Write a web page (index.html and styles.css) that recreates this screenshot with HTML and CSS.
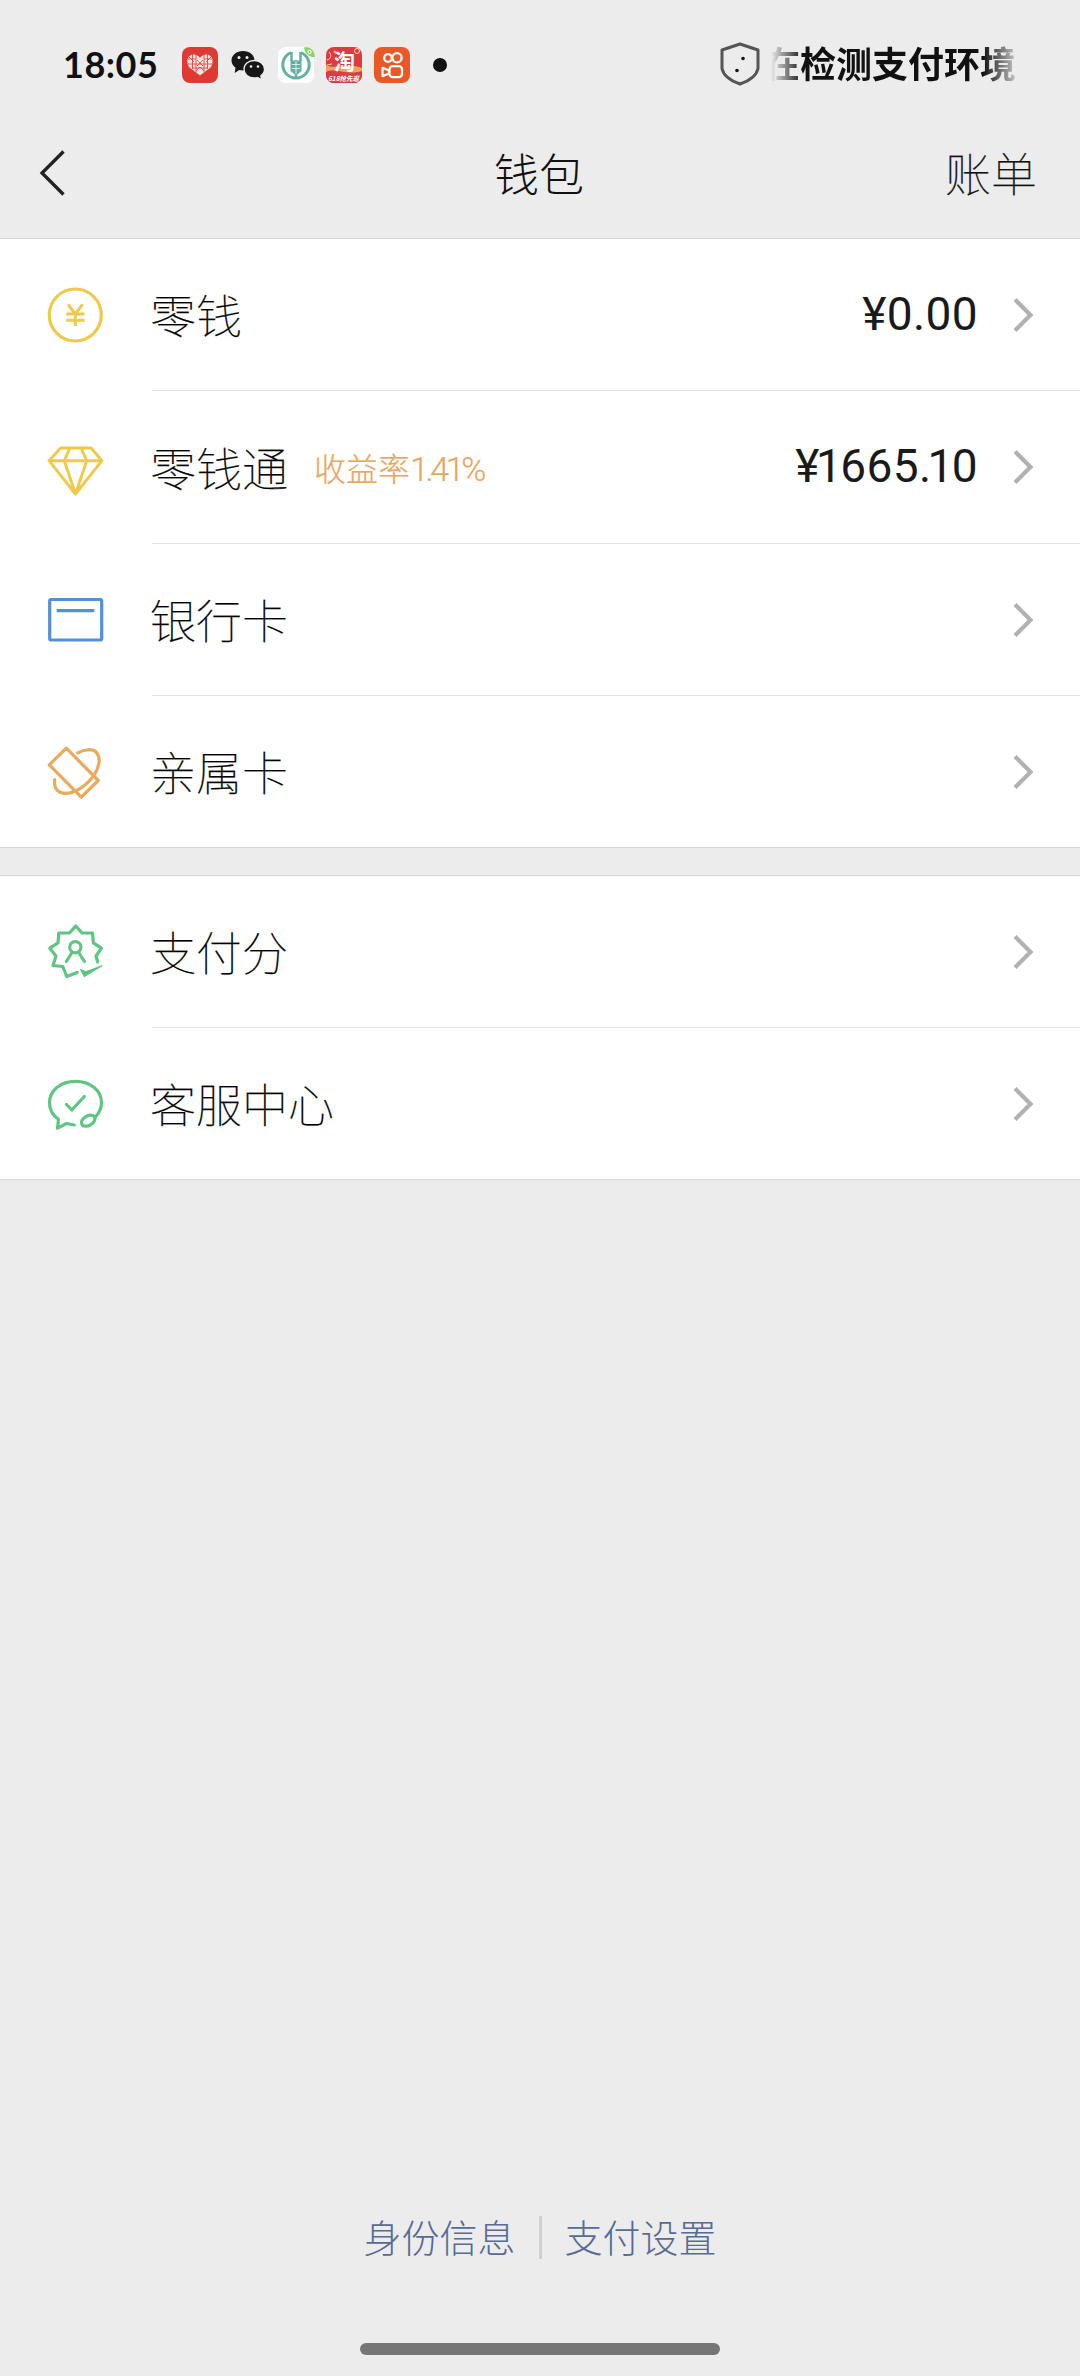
FILE: index.html
```html
<!DOCTYPE html>
<html lang="zh-CN">
<head>
<meta charset="utf-8">
<title>钱包</title>
<link rel="stylesheet" href="styles.css">
</head>
<body>
<svg class="defs" width="0" height="0" aria-hidden="true">
  <symbol id="chevron" viewBox="0 0 22 38"><path d="M3 3.500 18.500 19 3 34.500" fill="none" stroke="#b2b2b2" stroke-width="4.200"/></symbol>
</svg>
<div class="screen">
  <div class="status">
    <span class="time">18:05</span>
    <div class="apps">
      <svg viewBox="0 0 36 36"><rect width="36" height="36" rx="8" fill="#de3a33"/>
        <path d="M18 28.500 7 20C3.500 14 6 7 12 7.500c3 .2 5 2 6 3.500 1-1.500 3-3.300 6-3.500 6-.5 8.500 6.500 5 12.500z" fill="#fbe3e0"/>
        <path d="M10.500 7v15M14 8v17M22 8v17M25.500 7v15M6 12h8M22 12h8M6 17h24M10 21h16M15 13l6 6M21 13l-6 6M7 10l5 5M29 10l-5 5M14 24l4-4 4 4" stroke="#de3a33" stroke-width=".8" fill="none"/></svg>
      <svg viewBox="0 0 36 36"><path d="M13 4C6.500 4 1.500 8.200 1.500 13.500c0 3 1.600 5.500 4 7.300L4.700 26l4.500-2.900c1.300.3 2.500.4 3.800.4 6.500 0 11.500-4.400 11.500-10S19.500 4 13 4z" fill="#171717"/>
        <path d="M24.200 13.500c-6 0-10.200 3.800-10.200 8.700s4.200 8.800 10.200 8.800c1.200 0 2.300-.2 3.300-.5l4.300 2.300-1-4c2.100-1.600 3.700-3.900 3.700-6.600 0-4.900-4.600-8.700-10.300-8.700z" fill="#171717" stroke="#ededed" stroke-width="1.300"/>
        <g fill="#ededed"><circle cx="9" cy="10.500" r="1.500"/><circle cx="17" cy="10.500" r="1.500"/><circle cx="21" cy="19.500" r="1.300"/><circle cx="28" cy="19.500" r="1.300"/></g></svg>
      <svg class="bleed" viewBox="0 0 36 36"><rect width="36" height="36" rx="8" fill="#fff"/>
        <path d="M13 5.600A13.200 13.200 0 1 0 23 5.600" fill="none" stroke="#66b0a3" stroke-width="3"/>
        <path d="M13.500 5v9M22.500 5v9M18 13v19" fill="none" stroke="#66b0a3" stroke-width="2.500"/><path d="M12.500 13.500h11V24L18 28.500 12.500 24z" fill="#66b0a3"/><path d="M14 17.500h8M14 21.500h8M18 14v13" stroke="#d5ece7" stroke-width="1"/>
        <path d="M26 .5c5-1 10 1 11 9.500-5 .5-10-2-11-9.500z" fill="#8fd16b"/><circle cx="31.500" cy="5" r="1.700" fill="none" stroke="#fff"/></svg>
      <svg viewBox="0 0 36 36"><rect width="36" height="36" rx="8" fill="#dc3b43"/>
        <path d="M0 18C8 23 22 15 36 21v8H0z" fill="#f0a35c"/><path d="M0 25c10-5 19 4 36-1v4a8 8 0 0 1-8 8H8a8 8 0 0 1-8-8z" fill="#d83c4b"/>
        <g fill="none" stroke="#ffd7b4"><path d="M1 13c4-1 5-5 2-8M1 18l5-1"/><circle cx="31" cy="4" r="2.500"/><circle cx="9" cy="5" r="1"/></g>
        <text class="app-glyph" x="18.500" y="21.500">淘</text><text class="app-tag" x="17.500" y="33.500">618抢先逛</text></svg>
      <svg viewBox="0 0 36 36"><rect width="36" height="36" rx="8" fill="#ea5828"/>
        <g fill="none" stroke="#fff" stroke-width="2.200" stroke-linejoin="round"><circle cx="14" cy="11" r="3.800"/><circle cx="23" cy="10.700" r="4.600"/><rect x="15.500" y="19.200" width="12.500" height="11" rx="3.200"/><path d="m15 23.500-6.500-2.700v8.500l6.500-2.800z"/></g></svg>
    </div>
    <span class="more"></span>
    <svg class="shield" viewBox="0 0 42 46"><path d="M21 3 39 9v18.500Q37 37.500 21 43 5 37.500 3 27.500V9z" fill="none" stroke="#555" stroke-width="3" stroke-linejoin="round"/><circle cx="24" cy="17.500" r="1.800" fill="#111"/><circle cx="18" cy="29.500" r="1.800" fill="#111"/></svg>
    <div class="ticker"><span>在检测支付环境</span></div>
  </div>
  <header class="nav">
    <svg class="back" viewBox="0 0 32 50"><path d="M26.500 3.500 5 25l21.500 21.500" fill="none" stroke="#222" stroke-width="3.300"/></svg>
    <h1>钱包</h1>
    <a class="bill">账单</a>
  </header>
  <main>
    <section class="list">
      <div class="row">
        <svg class="icon gold" viewBox="0 0 60 60"><circle cx="30.300" cy="30" r="26"/><path d="m23 19.300 7.300 9.700 7.300-9.700M21.300 29h18.200M21.300 35.200h18.200M30.300 28v13" stroke-width="3" stroke-linecap="butt"/></svg>
        <div class="body"><span class="label">零钱</span><span class="amount">¥0.00</span><svg class="go"><use href="#chevron"/></svg></div>
      </div>
      <div class="row">
        <svg class="icon gold" viewBox="0 0 60 60"><path d="M15.700 10H46L57 22.700 30.500 56 4 22.700zM4 22.700h53M25 10l-5.700 12.700L30.500 56 41.700 22.700 36 10" stroke-width="2.900"/></svg>
        <div class="body"><span class="label">零钱通</span><span class="rate">收益率<b>1.41%</b></span><span class="amount">¥<span class="one">1</span>665.<span class="one">1</span>0</span><svg class="go"><use href="#chevron"/></svg></div>
      </div>
      <div class="row">
        <svg class="icon blue" viewBox="0 0 60 60"><rect x="4.700" y="9.500" width="52" height="40.500" rx="1.500"/><path d="M11.700 20.700h37.600" stroke-linecap="butt"/></svg>
        <div class="body"><span class="label">银行卡</span><svg class="go"><use href="#chevron"/></svg></div>
      </div>
      <div class="row">
        <svg class="icon orange" viewBox="0 0 60 60"><path d="M21.300 6.200 53.300 38.500 36.300 55.200 4.300 22.800zM32.700 10.800C40 7 48 6.500 51.500 10.500 56 16 54.500 25.500 48.300 34.200 43.500 40.500 37 46 30 49.200 19 54 8 51 9.700 37.500"/></svg>
        <div class="body"><span class="label">亲属卡</span><svg class="go"><use href="#chevron"/></svg></div>
      </div>
    </section>
    <section class="list">
      <div class="row">
        <svg class="icon green" viewBox="0 0 60 60"><path d="M52.700 40 51 34l5.500-7.800-8.200-5.400-.8-9.800-10.800-.2-6-6.800-6 6.800-10.900.2-.8 9.800-8.200 5.400L11 34l-3 9.500 9.800 1L21.700 54.500l10.500-4"/><circle cx="30.300" cy="25.200" r="5.600"/><path d="m27.300 30-6 9.500M33.300 30l6.200 9.500"/><path d="m35.500 47.500 3.800 7 17.700-10.800-16.300 6.100z" fill="#5fc583" stroke-width="1.200"/></svg>
        <div class="body"><span class="label">支付分</span><svg class="go"><use href="#chevron"/></svg></div>
      </div>
      <div class="row">
        <svg class="icon green" viewBox="0 0 60 60"><path d="M29.300 51 21.500 49.500 12.500 54.200 13.500 45.300C8 41.500 4.500 35.500 4.500 28.700 4.500 16.500 15.500 7.300 30.500 7.300S56.500 16.500 56.500 28.700c0 5-2.500 10.300-6 14.300"/><ellipse cx="43.200" cy="46.700" rx="7.300" ry="4.800" transform="rotate(-30 43.200 46.700)"/><path d="m21.500 30.500 5.300 5.500L39.300 22.500"/></svg>
        <div class="body"><span class="label">客服中心</span><svg class="go"><use href="#chevron"/></svg></div>
      </div>
    </section>
  </main>
  <footer class="links"><a>身份信息</a><i></i><a>支付设置</a></footer>
  <div class="home"></div>
</div>
</body>
</html>
```
FILE: styles.css
```css
* { box-sizing: border-box; }
body { margin: 0; background: #ececec; color: #111; font-family: "Noto Sans CJK SC", sans-serif; }
.defs { display: block; }
.screen { width: 1080px; height: 2376px; display: flex; flex-direction: column; overflow: hidden; }

.status { flex: none; height: 108px; padding: 22px 64px 0 63px; display: flex; align-items: center; }
.time { width: 119px; padding-bottom: 3px; font: 700 36px/1 Lato, sans-serif; letter-spacing: 0.5px; white-space: nowrap; }
.apps { display: flex; gap: 12px; }
.apps svg { display: block; width: 36px; height: 36px; }
.apps .bleed { overflow: visible; }
.app-glyph { font-size: 21px; font-weight: 700; fill: #fff; text-anchor: middle; }
.app-tag { font-size: 6.5px; font-weight: 700; font-style: italic; fill: #fff; text-anchor: middle; }
.more { width: 14px; height: 14px; margin-left: 23px; border-radius: 50%; background: #111; }
.shield { width: 42px; height: 46px; margin-left: auto; margin-bottom: 2px; }
.ticker { width: 245px; margin: 0 0 6px 10px; overflow: hidden; display: flex; justify-content: flex-end; -webkit-mask-image: linear-gradient(to right, transparent 0, #000 32px, #000 212px, transparent 252px); mask-image: linear-gradient(to right, transparent 0, #000 32px, #000 212px, transparent 252px); }
.ticker span { flex: none; font-size: 36px; line-height: 44px; font-weight: 700; white-space: nowrap; }

.nav { flex: none; height: 131px; padding: 0 43px 0 37px; display: grid; grid-template-columns: 1fr auto 1fr; align-items: center; border-bottom: 1px solid #d5d5d5; }
.back { width: 32px; height: 50px; }
.nav h1 { margin: 0; padding-left: 4px; font-size: 45px; line-height: 60px; font-weight: 300; }
.bill { justify-self: end; padding-bottom: 5px; font-size: 46px; line-height: 60px; font-weight: 100; -webkit-text-stroke: 0.25px #111; }

.list { background: #fff; border-bottom: 1px solid #d5d5d5; }
.list + .list { margin-top: 27px; border-top: 1px solid #d5d5d5; }
.row { height: 152px; padding-left: 45px; display: flex; align-items: center; }
.list:first-child .row:nth-child(2) { height: 153px; }
.row:last-child { height: 151px; }
.icon { width: 60px; height: 60px; flex: none; fill: none; stroke-width: 3.2; stroke-linecap: round; stroke-linejoin: round; }
.gold { stroke: #efc94c; }
.blue { stroke: #5390d9; }
.orange { stroke: #e9aa5c; }
.green { stroke: #5fc583; }
.body { flex: 1; align-self: stretch; margin-left: 47px; padding-right: 46px; display: flex; align-items: center; border-bottom: 1px solid #e2e2e2; }
.row:last-child .body { border-bottom: 0; }
.label { margin-left: -2px; padding-bottom: 3px; font-size: 46px; line-height: 60px; font-weight: 100; color: #000; -webkit-text-stroke: 0.25px #000; }
.rate { margin-left: 26px; font-size: 32px; line-height: 44px; font-weight: 300; color: #e8a55c; white-space: nowrap; -webkit-text-stroke: 0.2px #e8a55c; }
.rate b { font: 300 34px/1 Roboto, sans-serif; letter-spacing: -3.4px; }
.amount { margin-left: auto; padding-bottom: 2px; font: 400 46px/56px Roboto, sans-serif; color: #1a1a1a; letter-spacing: 0.4px; }
.one { margin: 0 -2px 0 -4px; }
.go { width: 22px; height: 38px; flex: none; margin-left: auto; }
.amount + .go { margin-left: 34px; }

.links { margin-top: auto; height: 60px; display: flex; align-items: center; justify-content: center; gap: 23px; font-size: 38px; line-height: 60px; font-weight: 300; color: #576b95; }
.links a { padding-bottom: 3px; }
.links i { width: 3px; height: 43px; background: #d0d0d0; }
.home { flex: none; width: 360px; height: 12px; margin: 76px auto 21px; border-radius: 6px; background: #767676; }
```
